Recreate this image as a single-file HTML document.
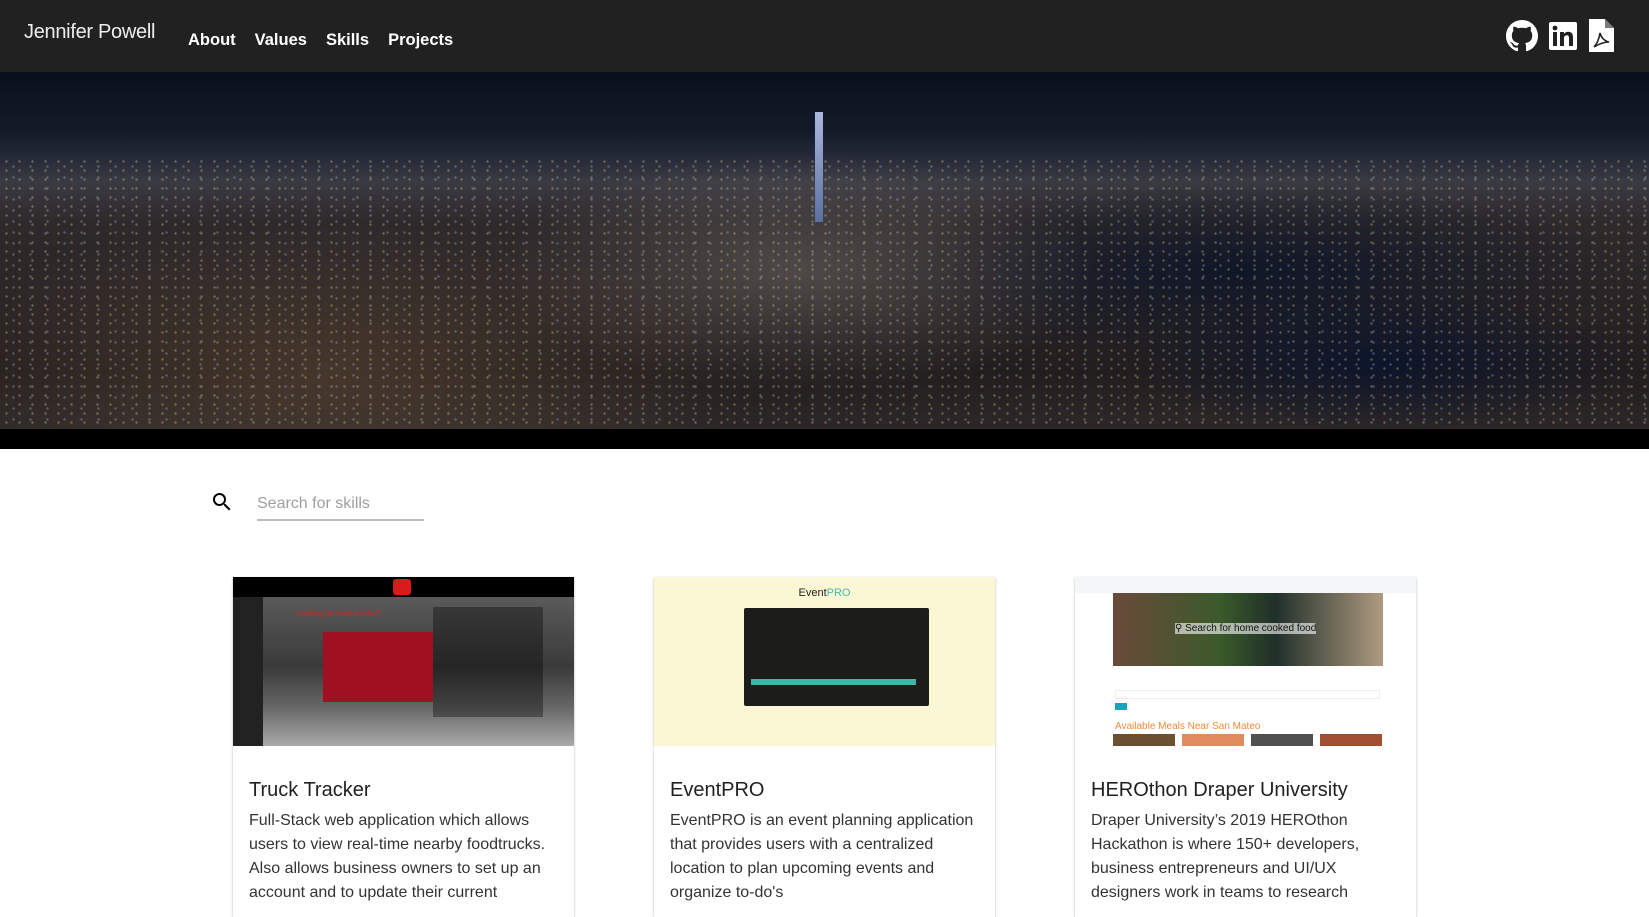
<!DOCTYPE html>
<html><head><meta charset="utf-8"><style>
*{box-sizing:border-box;margin:0;padding:0}
body{width:1649px;height:894px;overflow:hidden;background:#fff;font-family:"Liberation Sans",Roboto,sans-serif;position:relative}
.nav{position:absolute;left:0;top:0;width:1649px;height:72px;background:#212121;color:#fff}
.brand{position:absolute;left:24px;top:21px;font-size:20px;font-weight:300;letter-spacing:-.3px;color:#eee}
.links{position:absolute;left:188px;top:31px;font-size:16.5px;font-weight:bold}
.links span{margin-right:19px}
.hero{position:absolute;left:0;top:72px;width:1649px;height:377px;background:#000;overflow:hidden}
.sky{position:absolute;left:0;top:0;width:1649px;height:357px;
background:
radial-gradient(ellipse 420px 150px at 330px 300px,rgba(150,110,70,.3),transparent),
radial-gradient(ellipse 300px 120px at 800px 200px,rgba(160,150,140,.3),transparent),
radial-gradient(ellipse 380px 90px at 1250px 200px,rgba(10,20,40,.85),transparent),
radial-gradient(ellipse 260px 70px at 1380px 290px,rgba(10,20,45,.9),transparent),
linear-gradient(180deg,#0a0f1c 0,#131a28 60px,#252a38 85px,#3a3a42 110px,#2e2a2c 150px,#2a2526 220px,#221e1f 300px,#2c2828 357px)}
.dots{position:absolute;left:0;top:85px;width:1649px;height:272px;
background-image:radial-gradient(circle,rgba(255,220,160,.9) 0 1px,transparent 1.5px),radial-gradient(circle,rgba(200,220,255,.8) 0 1px,transparent 1.5px);
background-size:13px 9px,17px 11px;background-position:0 0,5px 4px;opacity:.35}
.tower{position:absolute;left:815px;top:40px;width:8px;height:110px;background:linear-gradient(#aab8e0,#5a70a0)}
.card{position:absolute;top:577px;width:341px;height:340px;background:#fff;box-shadow:0 1px 3px rgba(0,0,0,.2),0 1px 1px rgba(0,0,0,.12)}
.img{position:absolute;left:0;top:0;width:341px;height:169px;overflow:hidden}
.card h3{position:absolute;left:16px;top:202px;font-size:20px;font-weight:normal;color:#212121}
.card p{position:absolute;left:16px;top:232px;width:315px;font-size:16px;line-height:24px;color:#333}
</style></head><body>
<div class="nav">
<div class="brand">Jennifer Powell</div>
<div class="links"><span>About</span><span>Values</span><span>Skills</span><span>Projects</span></div>
<svg style="position:absolute;left:1506px;top:20px" width="32" height="32" viewBox="0 0 16 16"><path fill="#fff" d="M8 0C3.58 0 0 3.58 0 8c0 3.54 2.29 6.53 5.47 7.59.4.07.55-.17.55-.38 0-.19-.01-.82-.01-1.49-2.01.37-2.53-.49-2.69-.94-.09-.23-.48-.94-.82-1.13-.28-.15-.68-.52-.01-.53.63-.01 1.08.58 1.23.82.72 1.21 1.87.87 2.33.66.07-.52.28-.87.51-1.07-1.78-.2-3.64-.89-3.64-3.95 0-.87.31-1.59.82-2.15-.08-.2-.36-1.02.08-2.12 0 0 .67-.21 2.2.82.64-.18 1.32-.27 2-.27.68 0 1.36.09 2 .27 1.53-1.04 2.2-.82 2.2-.82.44 1.1.16 1.92.08 2.12.51.56.82 1.27.82 2.15 0 3.07-1.87 3.75-3.65 3.95.29.25.54.73.54 1.48 0 1.07-.01 1.93-.01 2.2 0 .21.15.46.55.38A8.013 8.013 0 0016 8c0-4.42-3.58-8-8-8z"/></svg>
<svg style="position:absolute;left:1549px;top:22px" width="28" height="28" viewBox="0 0 28 28"><rect width="28" height="28" rx="2" fill="#fff"/><rect x="4" y="10" width="4" height="14" fill="#212121"/><circle cx="6" cy="6" r="2.4" fill="#212121"/><path d="M11 10h4v2c1-1.6 2.5-2.3 4.3-2.3 3 0 4.7 1.8 4.7 5.5V24h-4v-8c0-1.8-.7-2.8-2.2-2.8S15 14.3 15 16v8h-4z" fill="#212121"/></svg>
<svg style="position:absolute;left:1589px;top:19px" width="25" height="33" viewBox="0 0 25 33"><path d="M0 0h16l9 9v24H0z" fill="#fff"/><path d="M16 0v9h9" fill="#212121" opacity=".6"/><path d="M5 28c3-3 5-8 6-14 1 4 4 8 9 9-5 0-10 2-15 5z" fill="none" stroke="#212121" stroke-width="1.6"/></svg>
</div>
<div class="hero"><div class="sky"></div><div class="dots"></div><div class="tower"></div></div>

<svg style="position:absolute;left:210px;top:490px" width="24" height="24" viewBox="0 0 24 24"><path fill="#000" d="M15.5 14h-.79l-.28-.27A6.47 6.47 0 0 0 16 9.5 6.5 6.5 0 1 0 9.5 16c1.61 0 3.09-.59 4.23-1.57l.27.28v.79l5 4.99L20.49 19l-4.99-5zm-6 0C7.01 14 5 11.99 5 9.5S7.01 5 9.5 5 14 7.01 14 9.5 11.99 14 9.5 14z"/></svg>
<div style="position:absolute;left:257px;top:495px;font-size:16px;color:#9e9e9e">Search for skills</div>
<div style="position:absolute;left:257px;top:519px;width:167px;height:2px;background:#bdbdbd"></div>

<div class="card" style="left:233px">
<div class="img" style="background:linear-gradient(180deg,#000 0 20px,#5a5a5a 20px,#3a3a3a 90px,#666 130px,#aaa 169px)">
<div style="position:absolute;left:160px;top:2px;width:18px;height:16px;background:#d81c1c;border-radius:3px"></div>
<div style="position:absolute;left:90px;top:55px;width:110px;height:70px;background:#a01020"></div>
<div style="position:absolute;left:0;top:20px;width:30px;height:149px;background:#222"></div>
<div style="position:absolute;left:200px;top:30px;width:110px;height:110px;background:rgba(0,0,0,.35)"></div>
<div style="position:absolute;left:62px;top:32px;font-size:8px;color:#d22">Looking for food trucks?</div>
</div>
<h3>Truck Tracker</h3>
<p>Full-Stack web application which allows users to view real-time nearby foodtrucks. Also allows business owners to set up an account and to update their current</p>
</div>

<div class="card" style="left:654px">
<div class="img" style="background:#fbf6d4">
<div style="position:absolute;left:0;top:10px;width:341px;text-align:center;font-size:11px;color:#222">Event<span style="color:#4bb8a9">PRO</span></div>
<div style="position:absolute;left:90px;top:31px;width:185px;height:98px;background:#1c1c1a;border-radius:2px"></div>
<div style="position:absolute;left:97px;top:102px;width:165px;height:6px;background:#46b3a7"></div>
</div>
<h3>EventPRO</h3>
<p>EventPRO is an event planning application that provides users with a centralized location to plan upcoming events and organize to-do's</p>
</div>

<div class="card" style="left:1075px">
<div class="img" style="background:#fff">
<div style="position:absolute;left:0;top:0;width:341px;height:16px;background:#f5f6f8"></div>
<div style="position:absolute;left:38px;top:16px;width:270px;height:73px;background:linear-gradient(90deg,#6a4a3a,#3a5a2a 40%,#20302a 60%,#b09a80)"></div>
<div style="position:absolute;left:100px;top:46px;font-size:10px;color:#111;background:rgba(255,255,255,.6)">&#9906; Search for home cooked food</div>
<div style="position:absolute;left:40px;top:113px;width:265px;height:9px;border:1px solid #eee"></div>
<div style="position:absolute;left:40px;top:126px;width:12px;height:7px;background:#1aa0c0"></div>
<div style="position:absolute;left:40px;top:144px;font-size:10px;color:#f08a40">Available Meals Near San Mateo</div>
<div style="position:absolute;left:38px;top:157px;width:62px;height:25px;background:#6a5030"></div>
<div style="position:absolute;left:107px;top:157px;width:62px;height:25px;background:#e08a60"></div>
<div style="position:absolute;left:176px;top:157px;width:62px;height:25px;background:#505050"></div>
<div style="position:absolute;left:245px;top:157px;width:62px;height:25px;background:#a05030"></div>
</div>
<h3>HEROthon Draper University</h3>
<p>Draper University’s 2019 HEROthon Hackathon is where 150+ developers, business entrepreneurs and UI/UX designers work in teams to research</p>
</div>
</body></html>
